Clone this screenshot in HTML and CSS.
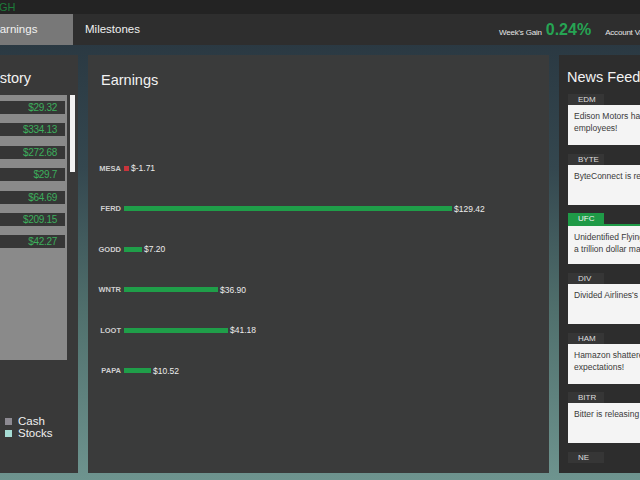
FILE: index.html
```html
<!DOCTYPE html>
<html lang="en">
<head>
    <meta charset="UTF-8">
    <meta name="viewport" content="width=device-width, initial-scale=1.0">
    <link rel="stylesheet" href="styles.css">
</head>
<body>
    <div class="top-strip"><span class="rank">HIGH</span></div>

    <header class="tab-bar">
        <div class="tab active">Earnings</div>
        <div class="tab">Milestones</div>
        <div class="stats">
            <span class="stat-label">Week's Gain</span>
            <span class="stat-value">0.24%</span>
            <span class="stat-label account">Account Value</span>
        </div>
    </header>

    <main class="board">
        <!-- 历史记录 -->
        <section class="panel history">
            <h2 class="panel-title">History</h2>
            <div class="history-body">
                <ul class="history-list">
                    <li class="history-row"><span class="amount">$29.32</span></li>
                    <li class="history-row"><span class="amount">$334.13</span></li>
                    <li class="history-row"><span class="amount">$272.68</span></li>
                    <li class="history-row"><span class="amount">$29.7</span></li>
                    <li class="history-row"><span class="amount">$64.69</span></li>
                    <li class="history-row"><span class="amount">$209.15</span></li>
                    <li class="history-row"><span class="amount">$42.27</span></li>
                </ul>
                <div class="scroll-track"><div class="scroll-thumb"></div></div>
            </div>
            <ul class="legend">
                <li><span class="swatch cash"></span>Cash</li>
                <li><span class="swatch stocks"></span>Stocks</li>
            </ul>
        </section>

        <!-- 收益图表 -->
        <section class="panel earnings">
            <h2 class="panel-title">Earnings</h2>
            <div class="chart">
                <div class="chart-row">
                    <span class="ticker">MESA</span>
                    <span class="bar loss" style="width: 5px"></span>
                    <span class="value">$-1.71</span>
                </div>
                <div class="chart-row">
                    <span class="ticker">FERD</span>
                    <span class="bar" style="width: 328px"></span>
                    <span class="value">$129.42</span>
                </div>
                <div class="chart-row">
                    <span class="ticker">GODD</span>
                    <span class="bar" style="width: 18px"></span>
                    <span class="value">$7.20</span>
                </div>
                <div class="chart-row">
                    <span class="ticker">WNTR</span>
                    <span class="bar" style="width: 94px"></span>
                    <span class="value">$36.90</span>
                </div>
                <div class="chart-row">
                    <span class="ticker">LOOT</span>
                    <span class="bar" style="width: 104px"></span>
                    <span class="value">$41.18</span>
                </div>
                <div class="chart-row">
                    <span class="ticker">PAPA</span>
                    <span class="bar" style="width: 27px"></span>
                    <span class="value">$10.52</span>
                </div>
            </div>
        </section>

        <!-- 新闻 -->
        <section class="panel news">
            <h2 class="panel-title">News Feed</h2>
            <div class="news-list">
                <article class="news-item">
                    <div class="news-tag">EDM</div>
                    <p class="news-text">Edison Motors has hired 500 new<br>employees!</p>
                </article>
                <article class="news-item">
                    <div class="news-tag">BYTE</div>
                    <p class="news-text">ByteConnect is releasing a new phone!</p>
                </article>
                <article class="news-item hot">
                    <div class="news-tag">UFC</div>
                    <p class="news-text">Unidentified Flying Company signed<br>a trillion dollar marketing deal!</p>
                </article>
                <article class="news-item">
                    <div class="news-tag">DIV</div>
                    <p class="news-text">Divided Airlines's profits are down!</p>
                </article>
                <article class="news-item">
                    <div class="news-tag">HAM</div>
                    <p class="news-text">Hamazon shattered earnings<br>expectations!</p>
                </article>
                <article class="news-item">
                    <div class="news-tag">BITR</div>
                    <p class="news-text">Bitter is releasing a new feature!</p>
                </article>
                <article class="news-item">
                    <div class="news-tag">NE</div>
                    <p class="news-text">New Energy is expanding overseas!</p>
                </article>
            </div>
        </section>
    </main>
</body>
</html>
```

FILE: styles.css
```css
* {
    margin: 0;
    padding: 0;
    box-sizing: border-box;
}

ul {
    list-style: none;
}

body {
    width: 640px;
    height: 480px;
    overflow: hidden;
    font-family: 'Liberation Sans', Arial, sans-serif;
    color: #eeeeee;
    background: linear-gradient(180deg, #27343e 0%, #34474f 35%, #50706d 65%, #6e948f 100%);
}

/* 顶部细条 */
.top-strip {
    height: 14px;
    background: #232323;
    font-size: 11px;
    line-height: 14px;
    white-space: nowrap;
    overflow: hidden;
}

.rank {
    display: inline-block;
    margin-left: -12px;
    color: #1c7c3a;
}

/* 标签栏 */
.tab-bar {
    display: flex;
    height: 31px;
    margin-left: -20px;
    width: 820px;
    background: #2e2e2e;
    white-space: nowrap;
}

.tab {
    width: 93px;
    padding-left: 12px;
    font-size: 11.5px;
    line-height: 31px;
    color: #f0f0f0;
}

.tab.active {
    background: #787878;
}

.stats {
    display: flex;
    align-items: baseline;
    margin-left: 333px;
    padding-top: 7px;
}

.stat-label {
    font-size: 8px;
    letter-spacing: -0.2px;
    color: #e6e6e6;
}

.stat-value {
    margin: 0 14px 0 4px;
    font-size: 16px;
    font-weight: bold;
    color: #26a453;
}

/* 主面板区域 */
.board {
    display: flex;
    gap: 10px;
    padding-top: 10px;
    height: 428px;
}

.panel {
    flex-shrink: 0;
    height: 418px;
}

.panel-title {
    font-size: 14.5px;
    font-weight: normal;
    line-height: 20px;
    color: #f2f2f2;
}

/* 历史记录 */
.history {
    width: 150px;
    margin-left: -72px;
    padding: 13px 3px 0 10px;
    background: #393939;
}

.history .panel-title {
    padding-left: 48px;
}

.history-body {
    display: flex;
    gap: 3px;
    margin-top: 7px;
}

.history-list {
    display: flex;
    flex-direction: column;
    gap: 9.4px;
    width: 129px;
    height: 265px;
    padding-top: 6px;
    background: #8a8a8a;
}

.history-row {
    height: 13px;
    margin-right: 2px;
    padding-right: 8px;
    background: #363636;
    text-align: right;
    font-size: 10px;
    line-height: 13px;
    letter-spacing: -0.3px;
    color: #3caf5c;
}

.scroll-track {
    width: 5px;
}

.scroll-thumb {
    height: 77px;
    background: #f2f2f2;
}

.legend {
    margin-top: 55px;
    padding-left: 67px;
    font-size: 11.5px;
    line-height: 12px;
    color: #f0f0f0;
}

.legend li {
    display: flex;
    align-items: center;
    gap: 6px;
}

.swatch {
    width: 7px;
    height: 7px;
}

.swatch.cash {
    background: #8d8a92;
}

.swatch.stocks {
    background: #a6dcd4;
}

/* 收益图表 */
.earnings {
    width: 461px;
    padding: 15px 0 0 13px;
    background: #3a3b3b;
}

.chart {
    display: flex;
    flex-direction: column;
    gap: 26.6px;
    margin: 71px 0 0 -8px;
}

.chart-row {
    display: flex;
    align-items: center;
    height: 14px;
}

.ticker {
    width: 28px;
    margin-right: 3px;
    text-align: right;
    font-size: 7.5px;
    font-weight: bold;
    color: #cfcfcf;
}

.bar {
    height: 5px;
    background: #1f9e49;
}

.bar.loss {
    background: #c8343b;
}

.value {
    margin-left: 2px;
    font-size: 8.5px;
    color: #ececec;
}

/* 新闻 */
.news {
    width: 160px;
    padding: 12px 0 10px 9px;
    background: #2d2d2d;
}

.news .panel-title {
    margin-left: -1px;
}

.news-list {
    margin-top: 7px;
    height: 369px;
    overflow: hidden;
}

.news-item {
    margin-bottom: 8.7px;
}

.news-tag {
    width: 36px;
    height: 11px;
    padding-left: 10px;
    background: #363636;
    font-size: 8px;
    line-height: 11px;
    color: #dedede;
}

.news-text {
    height: 40px;
    padding: 5px 6px;
    background: #f4f4f4;
    font-size: 8.5px;
    line-height: 12px;
    color: #3a3a3a;
    white-space: nowrap;
    overflow: hidden;
}

.news-item.hot .news-tag {
    background: #1f9a47;
    color: #f4f4f4;
}

.news-item.hot .news-text {
    border-top: 2px solid #1f9a47;
}
```
